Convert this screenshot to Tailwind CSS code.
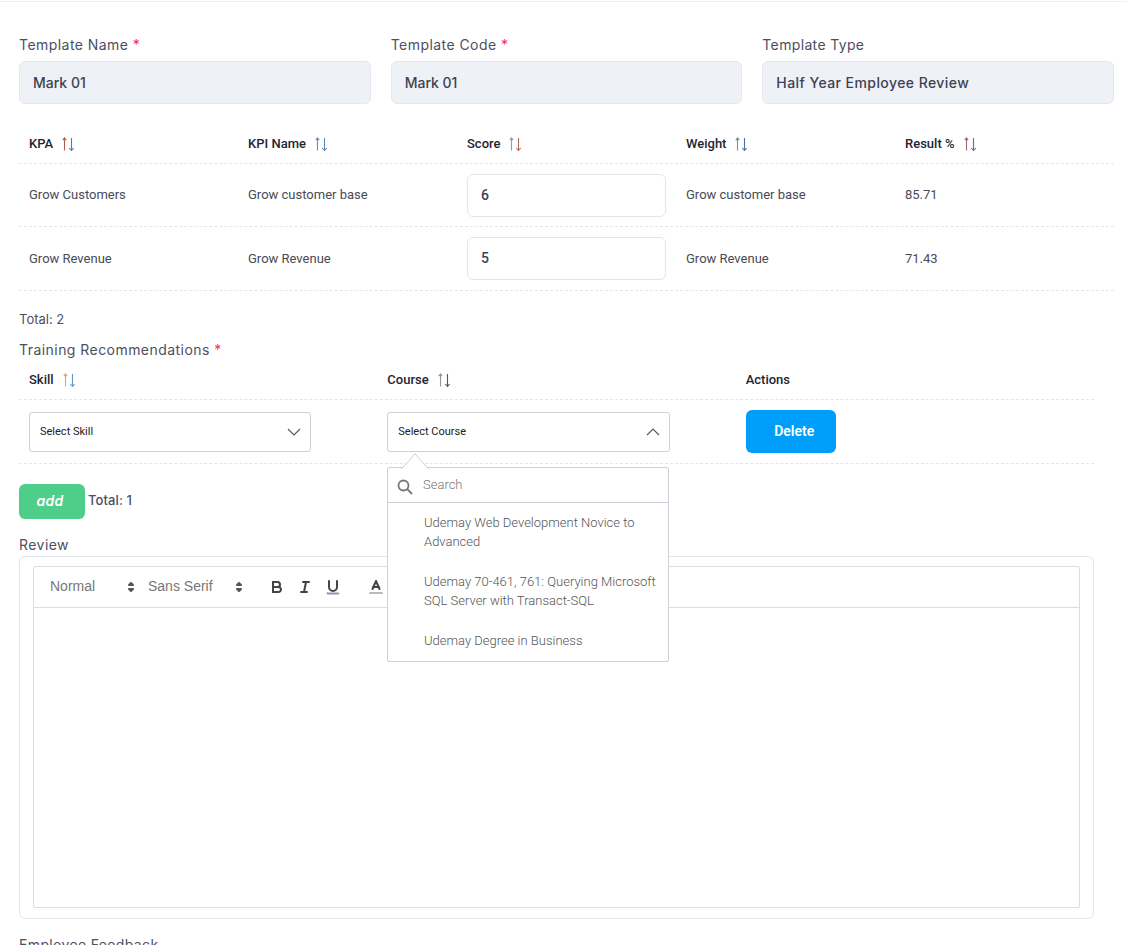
<!DOCTYPE html>
<html>
<head>
<meta charset="utf-8">
<script src="https://cdn.jsdelivr.net/npm/@tailwindcss/browser@4"></script>
</head>
<body class="bg-white overflow-hidden">
<svg class="hidden">
  <symbol id="caret" viewBox="0 0 18 18" fill="none" stroke="#555" stroke-width="2" stroke-linejoin="round">
    <polygon points="7 11 9 13 11 11 7 11"/><polygon points="7 7 9 5 11 7 7 7"/>
  </symbol>
</svg>
<div class="w-[1127px] h-[945px] overflow-hidden font-['Roboto',sans-serif]">
  <div class="h-[2px] border-b border-[#eef0f3]"></div>
  <div class="pl-[19px] pr-[13px] pt-[33px]">
  <!-- top fields -->
  <div class="grid grid-cols-3 gap-x-[20px] font-['Inter',sans-serif]">
    <div>
      <div class="h-[20px] leading-[20px] text-[14px] tracking-[0.45px] text-[#4d4f5f]">Template Name <span class="text-[#f62d51]">*</span></div>
      <div class="mt-[6px] h-[43px] flex items-center pb-[1px] px-[13px] rounded-[6px] bg-[#eef1f5] border border-[#e4e7ee] text-[14px] font-medium text-[#3e4154]">Mark 01</div>
    </div>
    <div>
      <div class="h-[20px] leading-[20px] text-[14px] tracking-[0.45px] text-[#4d4f5f]">Template Code <span class="text-[#f62d51]">*</span></div>
      <div class="mt-[6px] h-[43px] flex items-center pb-[1px] px-[13px] rounded-[6px] bg-[#eef1f5] border border-[#e4e7ee] text-[14px] font-medium text-[#3e4154]">Mark 01</div>
    </div>
    <div>
      <div class="h-[20px] leading-[20px] text-[14px] tracking-[0.35px] text-[#4d4f5f]">Template Type</div>
      <div class="mt-[6px] h-[43px] flex items-center pb-[1px] px-[13px] rounded-[6px] bg-[#eef1f5] border border-[#e4e7ee] text-[14px] font-medium tracking-[0.43px] text-[#3e4154]">Half Year Employee Review</div>
    </div>
  </div>

  <!-- KPI table -->
  <div class="mt-[20px] text-[13px]">
    <div class="grid grid-cols-5 h-[40px] border-b border-dashed border-[#e3e6ea] items-center font-medium text-[#1e2430]">
      <div class="pl-[10px] flex items-center gap-[7px]">KPA
        <svg class="w-[16px] h-[16px]" viewBox="0 0 16 16" fill="none" stroke-width="1.1"><path d="M4.5 14.5V2M2.8 4.2L4.5 2l1.7 2.2" stroke="#b45a50"/><path d="M11.5 2v12.5M9.3 12L11.5 14.5 13.7 12" stroke="#5a7a95"/></svg></div>
      <div class="pl-[10px] flex items-center gap-[7px]">KPI Name
        <svg class="w-[16px] h-[16px]" viewBox="0 0 16 16" fill="none" stroke-width="1.1"><path d="M4.5 14.5V2M2.8 4.2L4.5 2l1.7 2.2" stroke="#6f90a8"/><path d="M11.5 2v12.5M9.3 12L11.5 14.5 13.7 12" stroke="#5a88b0"/></svg></div>
      <div class="pl-[10px] flex items-center gap-[7px]">Score
        <svg class="w-[16px] h-[16px]" viewBox="0 0 16 16" fill="none" stroke-width="1.1"><path d="M4.5 14.5V2M2.8 4.2L4.5 2l1.7 2.2" stroke="#6fa8c8"/><path d="M11.5 2v12.5M9.3 12L11.5 14.5 13.7 12" stroke="#b5695f"/></svg></div>
      <div class="pl-[10px] flex items-center gap-[7px]">Weight
        <svg class="w-[16px] h-[16px]" viewBox="0 0 16 16" fill="none" stroke-width="1.1"><path d="M4.5 14.5V2M2.8 4.2L4.5 2l1.7 2.2" stroke="#6b8db0"/><path d="M11.5 2v12.5M9.3 12L11.5 14.5 13.7 12" stroke="#4a6fa0"/></svg></div>
      <div class="pl-[10px] flex items-center gap-[7px]">Result %
        <svg class="w-[16px] h-[16px]" viewBox="0 0 16 16" fill="none" stroke-width="1.1"><path d="M4.5 14.5V2M2.8 4.2L4.5 2l1.7 2.2" stroke="#a06a70"/><path d="M11.5 2v12.5M9.3 12L11.5 14.5 13.7 12" stroke="#5a6fa0"/></svg></div>
    </div>
    <div class="grid grid-cols-5 h-[63px] border-b border-dashed border-[#e3e6ea] items-center text-[#4a4a55]">
      <div class="pl-[10px]">Grow Customers</div>
      <div class="pl-[10px]">Grow customer base</div>
      <div class="pl-[10px]"><div class="w-[199px] h-[43px] flex items-center px-[13px] rounded-[6px] border border-[#e4e4ee] text-[14px] font-medium text-[#3e4154]">6</div></div>
      <div class="pl-[10px]">Grow customer base</div>
      <div class="pl-[10px]">85.71</div>
    </div>
    <div class="grid grid-cols-5 h-[64px] border-b border-dashed border-[#e3e6ea] items-center text-[#4a4a55]">
      <div class="pl-[10px]">Grow Revenue</div>
      <div class="pl-[10px]">Grow Revenue</div>
      <div class="pl-[10px]"><div class="w-[199px] h-[43px] flex items-center px-[13px] rounded-[6px] border border-[#e4e4ee] text-[14px] font-medium text-[#3e4154]">5</div></div>
      <div class="pl-[10px]">Grow Revenue</div>
      <div class="pl-[10px]">71.43</div>
    </div>
  </div>

  <div class="mt-[18px] h-[20px] leading-[20px] text-[13px] text-[#4d4f5f] font-['Inter',sans-serif]">Total: 2</div>
  <div class="mt-[11px] h-[20px] leading-[20px] text-[14px] tracking-[0.45px] text-[#4d4f5f] font-['Inter',sans-serif]">Training Recommendations <span class="text-[#f62d51]">*</span></div>

  <!-- Training table -->
  <div class="w-[1075px] text-[13px]">
    <div class="grid grid-cols-3 h-[40px] border-b border-dashed border-[#e3e6ea] items-center font-medium text-[#1e2430]">
      <div class="pl-[10px] flex items-center gap-[7px]">Skill
        <svg class="w-[16px] h-[16px]" viewBox="0 0 16 16" fill="none" stroke-width="1.1"><path d="M4.5 14.5V2M2.8 4.2L4.5 2l1.7 2.2" stroke="#d9a860"/><path d="M11.5 2v12.5M9.3 12L11.5 14.5 13.7 12" stroke="#5d9ac8"/></svg></div>
      <div class="pl-[10px] flex items-center gap-[7px]">Course
        <svg class="w-[16px] h-[16px]" viewBox="0 0 16 16" fill="none" stroke-width="1.1"><path d="M4.5 14.5V2M2.8 4.2L4.5 2l1.7 2.2" stroke="#8a9a8a"/><path d="M11.5 2v12.5M9.3 12L11.5 14.5 13.7 12" stroke="#4d5a60"/></svg></div>
      <div class="pl-[10px]">Actions</div>
    </div>
    <div class="grid grid-cols-3 h-[64px] border-b border-dashed border-[#e3e6ea] items-center">
      <div class="pl-[10px]">
        <div class="w-[282px] h-[40px] pl-[10px] pr-[9px] flex items-center justify-between rounded-[3px] border border-[#ccd0d8] text-[11px] text-[#222]">
          <span class="mt-[2px]">Select Skill</span>
          <svg class="w-[14px] h-[14px]" viewBox="0 0 14 14" fill="none" stroke="#555" stroke-width="1.1"><path d="M1 4l6 6 6-6"/></svg>
        </div>
      </div>
      <div class="pl-[10px] relative">
        <div class="w-[283px] h-[40px] pl-[10px] pr-[9px] flex items-center justify-between rounded-[3px] border border-[#ccd0d8] text-[11px] text-[#222]">
          <span class="mt-[2px]">Select Course</span>
          <svg class="w-[14px] h-[14px]" viewBox="0 0 14 14" fill="none" stroke="#555" stroke-width="1.1"><path d="M1 10l6-6 6 6"/></svg>
        </div>
      </div>
      <div class="pl-[10px]">
        <div class="w-[90px] h-[43px] flex items-center justify-center pl-[7px] rounded-[6px] bg-[#009efb] text-white text-[14px] font-semibold">Delete</div>
      </div>
    </div>
  </div>

  <div class="mt-[20px] flex items-center h-[35px] gap-[3px]">
    <div class="w-[66px] h-[35px] rounded-[6px] bg-[#4fce8a] text-white flex items-center justify-center pr-[4px] pb-[2px] text-[14px] tracking-[0.3px] font-semibold italic font-['Inter',sans-serif]">add</div>
    <div class="pb-[2px] text-[13px] tracking-[0.1px] font-medium text-[#4d4f5f] font-['Inter',sans-serif]">Total: 1</div>
  </div>

  <div class="mt-[16px] h-[20px] leading-[20px] text-[14px] tracking-[0.45px] text-[#4d4f5f] font-['Inter',sans-serif]">Review</div>

  <!-- editor -->
  <div class="mt-[1px] w-[1075px] h-[363px] rounded-[6px] border border-[#e4e6ee] pt-[9px] pl-[13px] pr-[13px]">
    <div class="h-[342px] border border-[#ddd] rounded-[2px] flex flex-col">
      <div class="h-[41px] border-b border-[#ddd] flex items-center pl-[8px] font-['Liberation_Sans',sans-serif] text-[14px] text-[#777]">
        <div class="w-[98px] h-[24px] pl-[8px] flex items-center justify-between"><span class="pb-[2px]">Normal</span><svg class="w-[18px] h-[18px]"><use href="#caret"/></svg></div>
        <div class="w-[108px] h-[24px] pl-[8px] flex items-center justify-between"><span class="pb-[2px]">Sans Serif</span><svg class="w-[18px] h-[18px]"><use href="#caret"/></svg></div>
        <div class="ml-[15px] flex">
          <div class="w-[28px] h-[24px] px-[5px] py-[3px]"><svg class="w-[18px] h-[18px]" viewBox="0 0 18 18" fill="none" stroke="#444" stroke-width="2"><path d="M5,4H9.5A2.5,2.5,0,0,1,12,6.5v0A2.5,2.5,0,0,1,9.5,9H5V4Z"/><path d="M5,9h5.5A2.5,2.5,0,0,1,13,11.5v0A2.5,2.5,0,0,1,10.5,14H5V9Z"/></svg></div>
          <div class="w-[28px] h-[24px] px-[5px] py-[3px]"><svg class="w-[18px] h-[18px]" viewBox="0 0 18 18" fill="none" stroke="#444" stroke-width="2" stroke-linecap="round"><line x1="7" x2="13" y1="4" y2="4"/><line x1="5" x2="11" y1="14" y2="14"/><line x1="8" x2="10" y1="14" y2="4"/></svg></div>
          <div class="w-[28px] h-[24px] px-[5px] py-[3px]"><svg class="w-[18px] h-[18px]" viewBox="0 0 18 18" fill="none" stroke="#444" stroke-width="2" stroke-linecap="round"><path d="M5,3V9a4,4,0,0,0,4,4H9a4,4,0,0,0,4-4V3"/><rect x="3" y="15" width="12" height="1" rx=".5" fill="#8e96b8" stroke="#8e96b8" stroke-width="1"/></svg></div>
        </div>
        <div class="ml-[15px] w-[28px] h-[24px] px-[5px] py-[3px]"><svg class="w-[18px] h-[18px]" viewBox="0 0 18 18" fill="none" stroke="#444" stroke-width="2" stroke-linecap="round" stroke-linejoin="round"><polyline points="5.5 11 9 3 12.5 11"/><line x1="11.63" x2="6.38" y1="9" y2="9"/><line x1="3" x2="15" y1="15" y2="15" stroke="#bbb"/></svg></div>
      </div>
      <div class="flex-1"></div>
    </div>
  </div>

  <div class="mt-[16px] h-[20px] leading-[20px] text-[14px] tracking-[0.35px] text-[#4d4f5f] font-['Inter',sans-serif]">Employee Feedback</div>
  </div>
</div>

<!-- course dropdown, over the content -->
<div class="absolute left-[387px] top-[467px] w-[282px] h-[195px] bg-white border border-[#ccd0d8] rounded-[2px] font-['Roboto',sans-serif] text-[13px] font-light text-[#555] z-10">
  <svg class="absolute left-[13px] -top-[15px] w-[28px] h-[16px]" viewBox="0 0 28 16"><path d="M0 15.5h1L14 .8 27 15.5h1" fill="white" stroke="#ccd0d8"/></svg>
  <div class="h-[35px] border-b border-[#ccd0d8] flex items-center pl-[9px] gap-[10px]">
    <svg class="w-[16px] h-[16px] mt-[4px]" viewBox="0 0 16 16" fill="none" stroke="#777" stroke-width="1.8"><circle cx="6.5" cy="6.5" r="5"/><path d="M10.2 10.2L15 15"/></svg>
    <span class="text-[#777]">Search</span>
  </div>
  <div class="pl-[36px] pr-[8px] pt-[10px] leading-[19px]">
    <div>Udemay Web Development Novice to Advanced</div>
    <div class="mt-[21px]">Udemay 70-461, 761: Querying Microsoft SQL Server with Transact-SQL</div>
    <div class="mt-[21px]">Udemay Degree in Business</div>
  </div>
</div>
</body>
</html>
